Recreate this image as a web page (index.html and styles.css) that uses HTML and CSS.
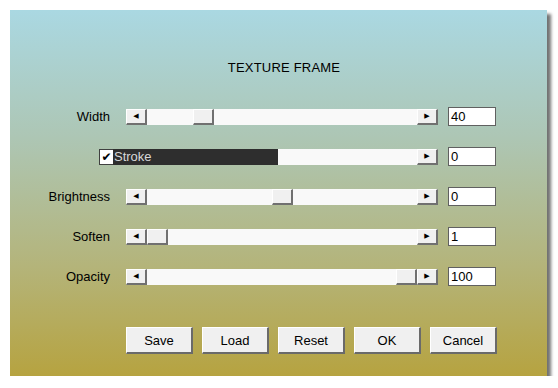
FILE: index.html
```html
<!DOCTYPE html>
<html lang="en">
<head>
    <meta charset="UTF-8">
    <title>Texture Frame</title>
    <link rel="stylesheet" href="styles.css">
</head>
<body>
    <div class="dialog">
        <div class="title">TEXTURE FRAME</div>

        <div class="rows">
            <div class="row">
                <div class="label">Width</div>
                <div class="slider">
                    <div class="arrow left">&#9664;</div>
                    <div class="trough"><div class="thumb" style="margin-left: 46px"></div></div>
                    <div class="arrow right">&#9654;</div>
                </div>
                <div class="value">40</div>
            </div>
            <div class="row">
                <div class="check-slot"><div class="check">&#10004;</div></div>
                <div class="slider stroke">
                    <div class="fill">Stroke</div>
                    <div class="trough"></div>
                    <div class="arrow right">&#9654;</div>
                </div>
                <div class="value">0</div>
            </div>
            <div class="row">
                <div class="label">Brightness</div>
                <div class="slider">
                    <div class="arrow left">&#9664;</div>
                    <div class="trough"><div class="thumb" style="margin-left: 125px"></div></div>
                    <div class="arrow right">&#9654;</div>
                </div>
                <div class="value">0</div>
            </div>
            <div class="row">
                <div class="label">Soften</div>
                <div class="slider">
                    <div class="arrow left">&#9664;</div>
                    <div class="trough"><div class="thumb" style="margin-left: 0px"></div></div>
                    <div class="arrow right">&#9654;</div>
                </div>
                <div class="value">1</div>
            </div>
            <div class="row">
                <div class="label">Opacity</div>
                <div class="slider">
                    <div class="arrow left">&#9664;</div>
                    <div class="trough"><div class="thumb" style="margin-left: 249px"></div></div>
                    <div class="arrow right">&#9654;</div>
                </div>
                <div class="value">100</div>
            </div>
        </div>

        <div class="buttons">
            <button class="button">Save</button>
            <button class="button">Load</button>
            <button class="button">Reset</button>
            <button class="button">OK</button>
            <button class="button">Cancel</button>
        </div>
    </div>
</body>
</html>
```

FILE: styles.css
```css
body {
    margin: 0;
    background: white;
    font-family: "Liberation Sans", Arial, sans-serif;
    font-size: 13px;
    color: black;
}
.dialog {
    margin: 10px 0 0 10px;
    width: 537px;
    height: 366px;
    box-sizing: border-box;
    background: linear-gradient(to bottom, #aad8e2, #adc6b4 35%, #b4b47a 70%, #b6a340);
    box-shadow: 4px 4px 3px rgba(0, 0, 0, 0.55);
    padding-top: 50px;
}
.title {
    text-align: center;
    line-height: 15px;
    height: 15px;
    padding-left: 11px;
    letter-spacing: 0.2px;
}
.rows {
    display: flex;
    flex-direction: column;
    gap: 21px;
    margin-top: 32px;
}
.row {
    display: flex;
    align-items: center;
    height: 19px;
}
.label {
    width: 100px;
    text-align: right;
    margin-right: 16px;
}
.check-slot {
    width: 103px;
    display: flex;
    justify-content: flex-end;
}
.slider {
    display: flex;
    width: 312px;
    height: 16px;
}
.slider.stroke {
    width: 325px;
}
.check {
    width: 13px;
    height: 14px;
    border: 1px solid #404040;
    border-right: none;
    background: white;
    font-size: 12px;
    font-weight: bold;
    line-height: 14px;
    text-align: center;
    font-family: "DejaVu Sans", sans-serif;
}
.fill {
    width: 165px;
    background: #2e2e2e;
    color: #d8d8d8;
    line-height: 16px;
    padding-left: 1px;
    box-sizing: border-box;
}
.trough {
    flex: 1;
    display: flex;
    background: #f9f9f9;
}
.arrow,
.thumb {
    width: 21px;
    height: 16px;
    box-sizing: border-box;
    background: #f0f0f0;
    border-top: 1px solid white;
    border-left: 1px solid white;
    border-right: 2px solid #707070;
    border-bottom: 2px solid #707070;
}
.arrow {
    font-size: 7px;
    line-height: 13px;
    text-align: center;
    font-family: "DejaVu Sans", sans-serif;
}
.value {
    width: 48px;
    height: 19px;
    box-sizing: border-box;
    margin-left: 10px;
    border: 1px solid #606060;
    background: white;
    line-height: 17px;
    padding-left: 2px;
}
.buttons {
    display: flex;
    gap: 9px;
    margin: 41px 0 0 116px;
}
.button {
    width: 67px;
    height: 27px;
    background: #f0f0f0;
    font-family: "Liberation Sans", Arial, sans-serif;
    font-size: 13px;
    color: black;
    border-top: 1px solid white;
    border-left: 1px solid white;
    border-right: 2px solid #6a6a6a;
    border-bottom: 2px solid #6a6a6a;
    padding: 0;
}
```
